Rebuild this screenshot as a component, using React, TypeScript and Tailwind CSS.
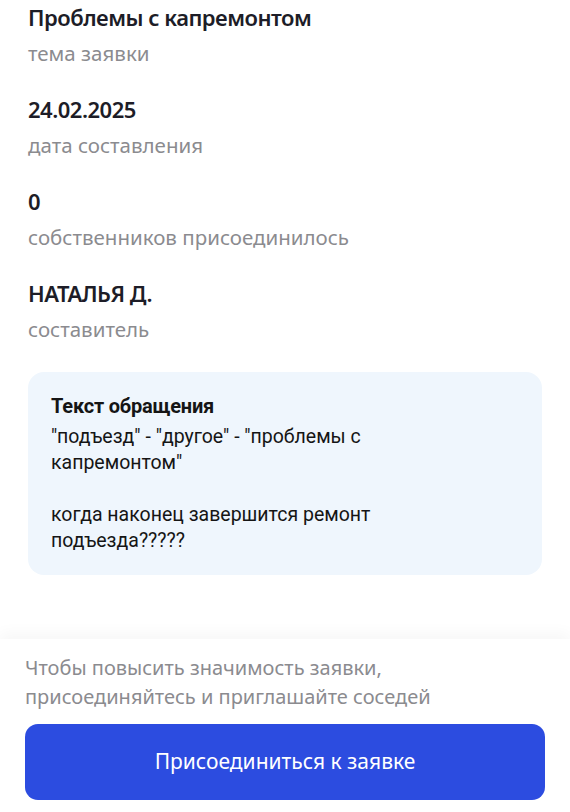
// App.tsx
const fields = [
    { value: 'Проблемы с капремонтом', label: 'тема заявки' },
    { value: '24.02.2025', label: 'дата составления' },
    { value: '0', label: 'собственников присоединилось' },
    { value: 'НАТАЛЬЯ Д.', label: 'составитель' },
]

function Field({ value, label }: { value: string; label: string }) {
    return (
        <div className="flex flex-col gap-[10px]">
            <p className="text-[22px] leading-[28px] font-semibold tracking-[-0.5px] text-[#1d1d27]">{value}</p>
            <p className="text-[20.5px] leading-[24px] text-[#8b8b8f]">{label}</p>
        </div>
    )
}

export default function App() {
    return (
        <div
            className="w-[570px] h-[812px] bg-white flex flex-col overflow-hidden"
            style={{ fontFamily: '"Noto Sans", sans-serif' }}
        >
            {/* Request details */}
            <div className="flex-1 px-[28px] pt-[3px] flex flex-col">
                <div className="flex flex-col gap-[30px]">
                    {fields.map(f => (
                        <Field key={f.label} value={f.value} label={f.label} />
                    ))}
                </div>

                <div
                    className="mt-[31px] rounded-[16px] bg-[#eff6fd] pl-[23px] pr-[20px] pt-[21px] pb-[21px] text-[#151515]"
                    style={{ fontFamily: 'Roboto, sans-serif' }}
                >
                    <p className="text-[20px] leading-[26px] font-bold tracking-[-0.2px]">Текст обращения</p>
                    <p className="mt-[5px] text-[19.5px] leading-[26px] whitespace-pre-line">
                        {'"подъезд" - "другое" - "проблемы с\nкапремонтом"\n\nкогда наконец завершится ремонт\nподъезда?????'}
                    </p>
                </div>
            </div>

            {/* Bottom sheet */}
            <div className="px-[25px] pt-[14px] pb-[12px] bg-white shadow-[0_-6px_14px_rgba(0,0,0,0.035)]">
                <p className="text-[20px] leading-[29px] text-[#8b8b8f]">
                    Чтобы повысить значимость заявки,<br />
                    присоединяйтесь и приглашайте соседей
                </p>
                <button className="mt-[13px] w-full h-[76px] rounded-[13px] bg-[#2c4ce0] text-white text-[21px]">
                    Присоединиться к заявке
                </button>
            </div>
        </div>
    )
}
